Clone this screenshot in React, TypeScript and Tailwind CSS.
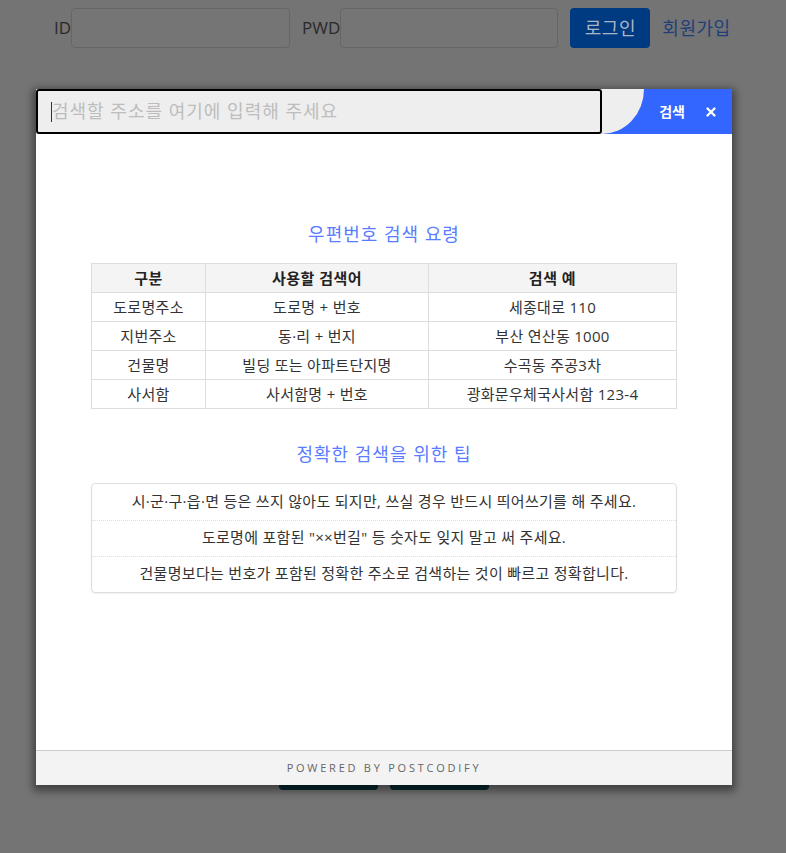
import { X } from 'lucide-react';

const rows = [
  { kind: '도로명주소', query: '도로명 + 번호', example: '세종대로 110' },
  { kind: '지번주소', query: '동·리 + 번지', example: '부산 연산동 1000' },
  { kind: '건물명', query: '빌딩 또는 아파트단지명', example: '수곡동 주공3차' },
  { kind: '사서함', query: '사서함명 + 번호', example: '광화문우체국사서함 123-4' },
];

const tips = [
  '시·군·구·읍·면 등은 쓰지 않아도 되지만, 쓰실 경우 반드시 띄어쓰기를 해 주세요.',
  '도로명에 포함된 "××번길" 등 숫자도 잊지 말고 써 주세요.',
  '건물명보다는 번호가 포함된 정확한 주소로 검색하는 것이 빠르고 정확합니다.',
];

const font = "font-['Open_Sans','Noto_Sans_CJK_KR',sans-serif]";

export default function App() {
  return (
    <div className={`relative h-[853px] overflow-hidden bg-[#747474] ${font}`}>
      {/* page behind the overlay */}
      <div className="flex items-center pt-2 pl-[54px] h-12">
        <label className="text-[17px] text-[#2a2a2a]">ID</label>
        <div className="w-[219px] h-10 rounded border border-[#666] bg-[#757575]" />
        <label className="ml-3 text-[17px] text-[#2a2a2a]">PWD</label>
        <div className="w-[218px] h-10 rounded border border-[#666] bg-[#757575]" />
        <button className="ml-3 w-20 h-10 rounded bg-[#003a80] text-[18px] tracking-[0.5px] text-[#a9b6c8]">로그인</button>
        <a className="ml-3 text-[18px] tracking-[0.5px] text-[#1f3f78]">회원가입</a>
      </div>
      <div className="flex justify-center gap-3 mt-[702px] pr-[18px]">
        <div className="w-[99px] h-10 rounded bg-[#062a30]" />
        <div className="w-[99px] h-10 rounded bg-[#062a30]" />
      </div>

      {/* postcode modal */}
      <div className="absolute left-[36px] top-[89px] w-[696px] h-[696px] flex flex-col bg-white shadow-[0_3px_8px_3px_rgba(0,0,0,0.45)]">
        <div className="flex h-[45px] bg-[#3366ff]">
          <div className="w-[608px] h-full bg-[#eeeeee] rounded-br-[42px_45px]">
            <div className="w-[566px] h-full border-2 border-black rounded-[3px] flex items-center pl-[13px]">
              <span className="w-px h-5 bg-[#333]" />
              <span className="text-[18px] tracking-[1px] text-[#bdbdbd]">검색할 주소를 여기에 입력해 주세요</span>
            </div>
          </div>
          <div className="flex-1 flex items-center justify-end gap-[19px] pr-[14px]">
            <span className="text-sm font-bold text-white">검색</span>
            <X className="w-[14px] h-[14px] text-white" strokeWidth={4} />
          </div>
        </div>

        <div className="flex-1 pt-[88px] px-[55px] text-[15px] tracking-[0.3px] text-[#333]">
          <h2 className="h-6 leading-6 text-center text-[18px] tracking-[1px] text-[#5a7cff]">우편번호 검색 요령</h2>
          <table className="mt-[17px] w-full border-collapse text-center">
            <thead>
              <tr className="h-[29px] bg-[#f4f4f4]">
                <th className="w-[114px] border border-[#ddd] font-bold tracking-[0.5px] text-[#222]">구분</th>
                <th className="w-[223px] border border-[#ddd] font-bold tracking-[0.5px] text-[#222]">사용할 검색어</th>
                <th className="border border-[#ddd] font-bold tracking-[0.5px] text-[#222]">검색 예</th>
              </tr>
            </thead>
            <tbody>
              {rows.map(r => (
                <tr key={r.kind} className="h-[29px]">
                  <td className="border border-[#ddd]">{r.kind}</td>
                  <td className="border border-[#ddd]">{r.query}</td>
                  <td className="border border-[#ddd]">{r.example}</td>
                </tr>
              ))}
            </tbody>
          </table>

          <h2 className="mt-[33px] h-6 leading-6 text-center text-[18px] tracking-[1px] text-[#5a7cff]">정확한 검색을 위한 팁</h2>
          <ul className="mt-[17px] border border-[#ddd] rounded-sm shadow-[0_1px_2px_rgba(0,0,0,0.06)]">
            {tips.map((t, i) => (
              <li
                key={i}
                className={`h-9 pb-[2px] flex items-center justify-center ${i > 0 ? 'border-t border-dotted border-[#ddd]' : ''}`}
              >
                {t}
              </li>
            ))}
          </ul>
        </div>

        <div className="h-[35px] flex items-center justify-center border-t border-[#ccc] bg-[#f3f3f3]">
          <span className="text-[11px] tracking-[0.25em] text-[#666]">POWERED BY POSTCODIFY</span>
        </div>
      </div>
    </div>
  );
}
